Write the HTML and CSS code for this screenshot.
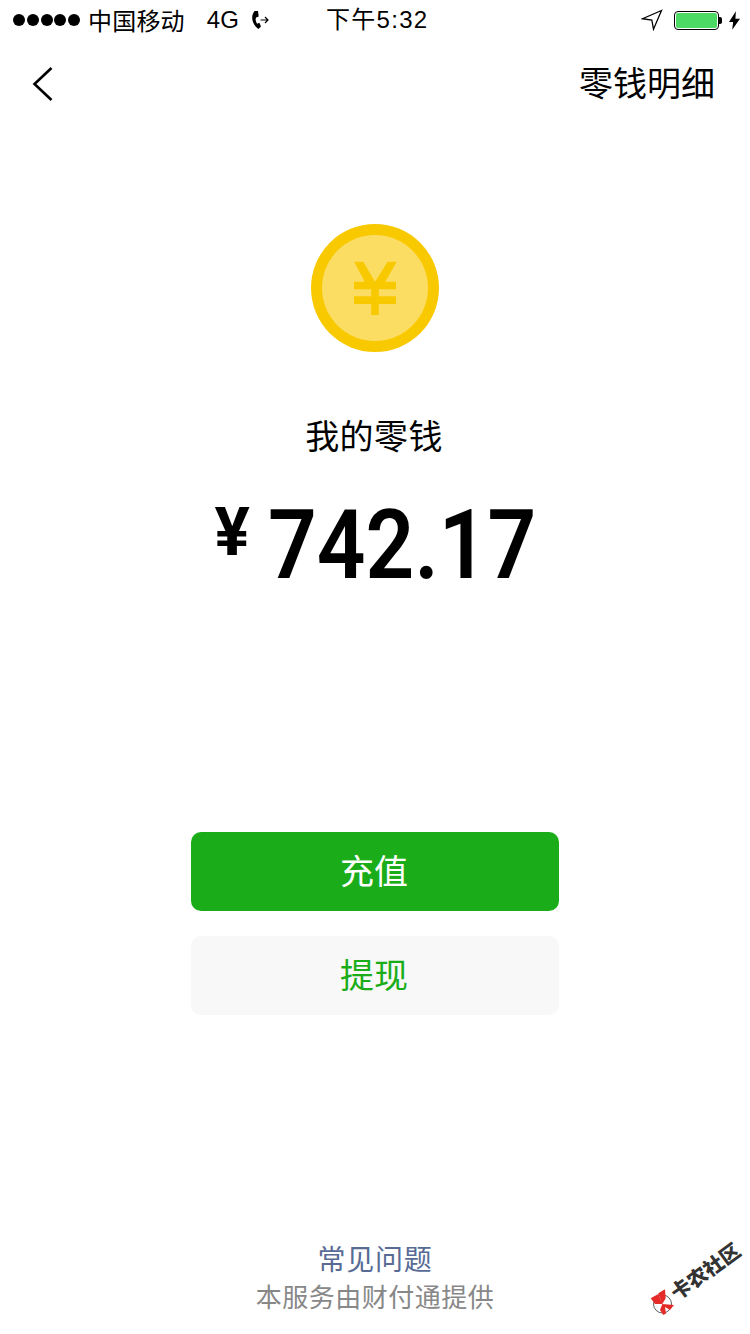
FILE: index.html
```html
<!DOCTYPE html>
<html lang="zh-CN">
<head>
<meta charset="utf-8">
<title>我的零钱</title>
<link rel="stylesheet" href="styles.css">
</head>
<body>
<div class="page">
  <header class="status">
    <div class="status-left">
      <div class="dots"><i></i><i></i><i></i><i></i><i></i></div>
      <span class="carrier">中国移动</span>
      <span class="net">4G</span>
      <svg class="call" width="22" height="20" viewBox="0 0 22 20"><path d="M4.500 1h3.500l.7 5.500-2.600.9C5.200 9.500 5.700 11.500 7.200 13.800l2.200-1 1.600 3.800-2.600 2.400C2.500 15 0 7 4.500 1z" fill="#000"/><path d="M10.500 10H18M15 7l3 3-3 3" fill="none" stroke="#000" stroke-width="1.200"/></svg>
    </div>
    <span class="time">下午5:32</span>
    <div class="status-right">
      <svg class="loc" width="22" height="22" viewBox="0 0 22 22"><path d="M20.500 1.500 1.500 9.700l9.300 1.300 1.700 9.200z" fill="none" stroke="#000" stroke-width="1.300"/></svg>
      <div class="battery"><div class="battery-fill"></div></div>
      <div class="battery-cap"></div>
      <svg class="bolt" width="11" height="19" viewBox="0 0 12 20"><path d="M7.500 0 0 11.500h4.500L3.500 20 12 8H7z" fill="#000"/></svg>
    </div>
  </header>

  <nav class="nav">
    <svg class="back" width="22" height="36" viewBox="0 0 22 36"><path d="M19.500 2 2.500 18l17 16" fill="none" stroke="#000" stroke-width="2.600"/></svg>
    <span class="nav-link">零钱明细</span>
  </nav>

  <main class="balance">
    <svg class="coin" width="128" height="128" viewBox="0 0 128 128">
      <circle cx="64" cy="64" r="64" fill="#f9c900"/>
      <circle cx="64" cy="64" r="53" fill="#fcdd63"/>
      <path d="M43.300 37.700h9L64 57.700l12.700-20h9L74.300 57.700H85v7.600H67.800v7H85V80H67.800v11h-7.600V80H43v-7.700h17.200v-7H43v-7.600h10.700z" fill="#f9c900"/>
    </svg>
    <h1 class="label">我的零钱</h1>
    <div class="amount"><span class="currency">¥</span><span class="value">742.17</span></div>
  </main>

  <div class="actions">
    <button class="btn btn-primary">充值</button>
    <button class="btn btn-secondary">提现</button>
  </div>

  <footer class="foot">
    <a class="faq">常见问题</a>
    <span class="provider">本服务由财付通提供</span>
  </footer>

  <svg class="mark-logo" width="28" height="30" viewBox="0 0 28 30">
    <circle cx="13.500" cy="17" r="9" fill="#fff" stroke="#333" stroke-width=".8"/>
    <path d="M1.700 11.300 9.300 7l4 10H6zM9.300 6.300 16 2.300l.7 9-3.400 5.700zM13.300 17 25 18l-4 5-5-3 1 6.500-2.700 1.500-3.300-5z" fill="#e52a2a"/>
  </svg>
  <span class="mark-text">卡农社区</span>
</div>
</body>
</html>
```

FILE: styles.css
```css
* { box-sizing: border-box; }
html, body { margin: 0; padding: 0; background: #fff; }
body { font-family: "Noto Sans CJK SC", "Liberation Sans", sans-serif; color: #000; }
.page { position: relative; width: 750px; height: 1334px; overflow: hidden; display: flex; flex-direction: column; align-items: center; }

.status { width: 100%; height: 40px; display: flex; align-items: center; justify-content: space-between; position: relative; padding: 0 10px 0 13px; }
.status-left { display: flex; align-items: center; }
.dots { display: flex; gap: 1.750px; margin-right: 8px; }
.dots i { width: 12px; height: 12px; border-radius: 50%; background: #000; }
.carrier { font-size: 24px; line-height: 40px; letter-spacing: .2px; }
.net { font-family: "Liberation Sans", sans-serif; font-size: 24px; margin-left: 22px; line-height: 40px; }
.call { margin-left: 11px; }
.time { position: absolute; left: 326px; top: 0; font-size: 24px; line-height: 40px; letter-spacing: 1.300px; font-family: "Liberation Sans", "Noto Sans CJK SC", sans-serif; }
.status-right { display: flex; align-items: center; }
.loc { margin-right: 11px; }
.battery { width: 45px; height: 19px; border: 1px solid #000; border-radius: 4px; padding: 1px; }
.battery-fill { width: 100%; height: 100%; background: #4cd964; border-radius: 2px; }
.battery-cap { width: 3px; height: 7px; background: #000; border-radius: 0 2px 2px 0; margin-right: 7px; }

.nav { width: 100%; height: 88px; display: flex; align-items: center; justify-content: space-between; padding: 0 35px 0 32px; }
.nav-link { font-size: 34px; line-height: 48px; padding-bottom: 4px; }

.balance { display: flex; flex-direction: column; align-items: center; padding-top: 96px; }
.coin { display: block; }
.label { margin: 59px 2px 0 0; font-size: 34px; font-weight: 400; line-height: 48px; letter-spacing: .4px; }
.amount { display: flex; align-items: flex-start; margin-top: 31px; height: 110px; }
.currency { font-family: "Roboto", sans-serif; font-weight: 700; font-size: 66px; line-height: 64px; margin: 11px 18px 0 4px; }
.value { font-family: "Roboto", sans-serif; font-weight: 600; font-size: 96px; line-height: 110px; transform: scaleX(.89); transform-origin: left center; margin-right: -30px; }

.actions { display: flex; flex-direction: column; gap: 25px; margin-top: 232px; }
.btn { width: 368px; height: 79px; border: 0; border-radius: 10px; font-family: inherit; font-size: 34px; padding: 0 2px 4px 0; }
.btn-primary { background: #1aad19; color: #fff; }
.btn-secondary { background: #f8f8f8; color: #1aad19; }

.foot { margin-top: auto; display: flex; flex-direction: column; align-items: center; padding-bottom: 19px; }
.faq { font-size: 28px; line-height: 38px; color: #576b95; letter-spacing: .7px; }
.provider { font-size: 26px; line-height: 38px; color: #888; letter-spacing: .5px; }

.mark-logo { position: absolute; left: 649px; top: 1287px; }
.mark-text { position: absolute; left: 665px; top: 1258px; font-size: 20px; font-weight: 900; color: #333; line-height: 26px; white-space: nowrap; transform: rotate(-36deg); }
```
